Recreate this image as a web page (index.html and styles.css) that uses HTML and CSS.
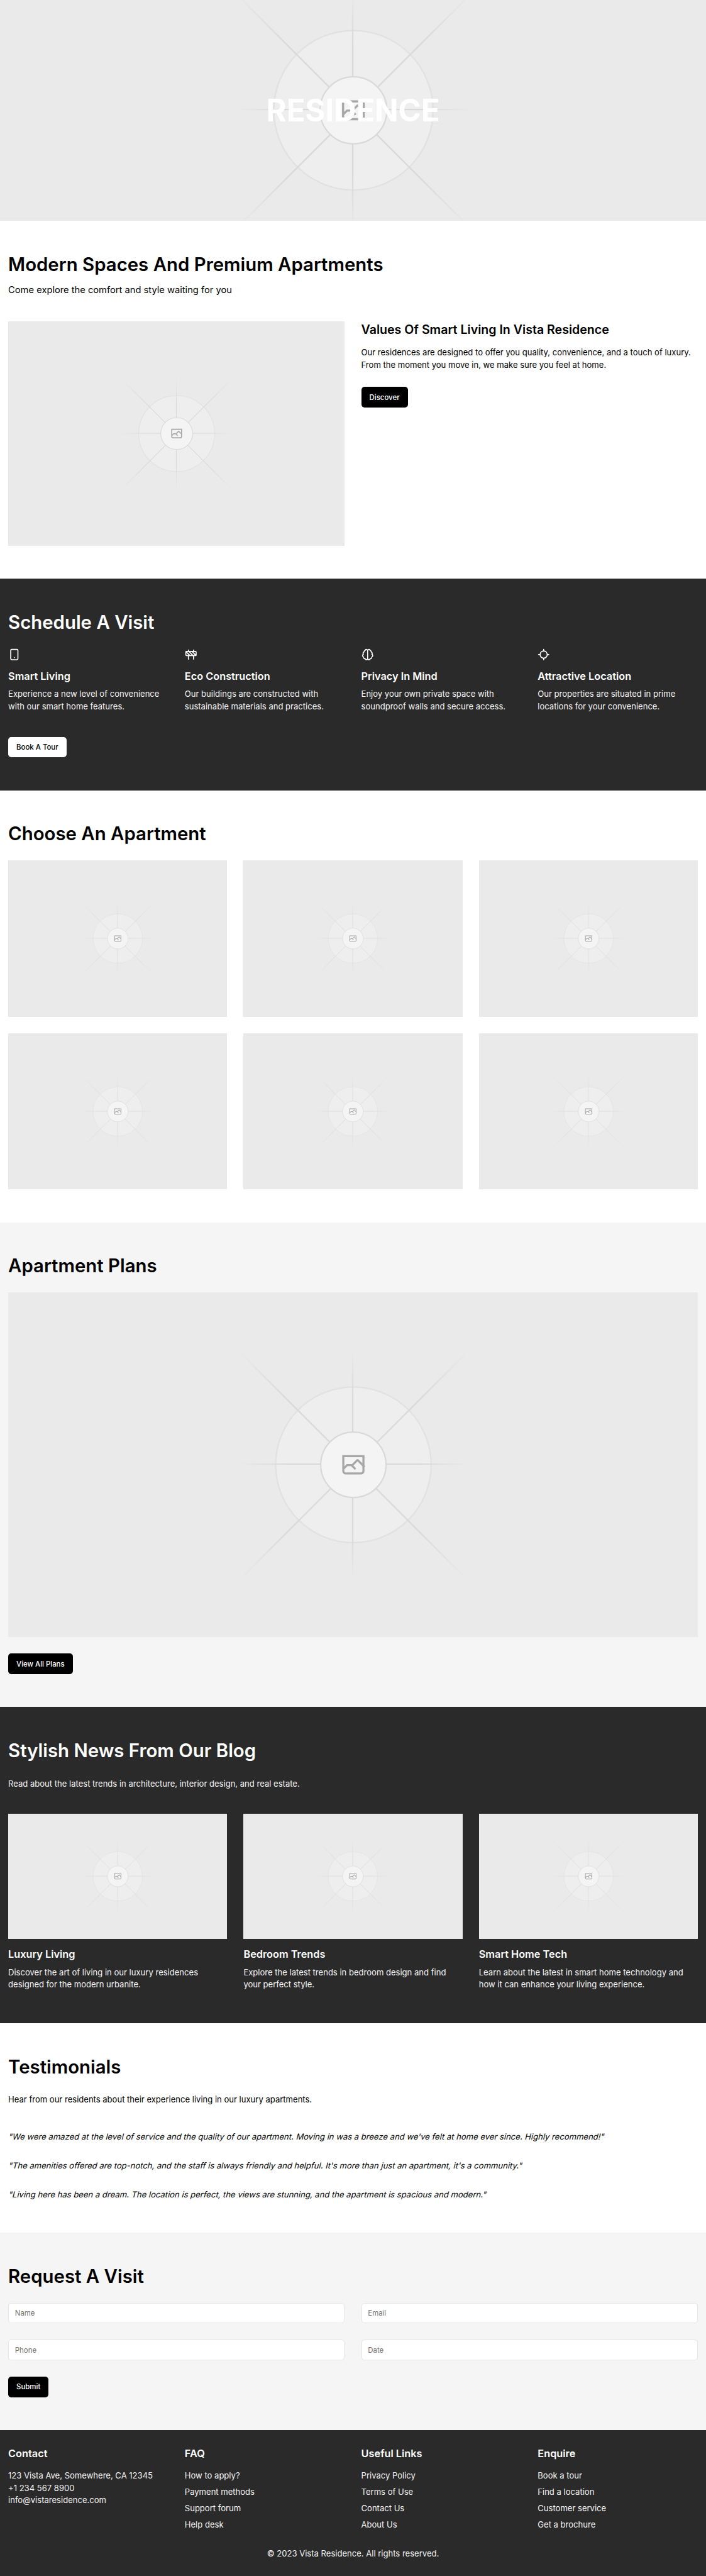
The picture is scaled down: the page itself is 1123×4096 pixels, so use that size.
FILE: index.html
```html
<!DOCTYPE html>
<html lang="en">
<head>
<meta charset="utf-8">
<title>Vista Residence</title>
<link rel="stylesheet" href="styles.css">
</head>
<body>
<svg class="defs" aria-hidden="true">
  <defs>
    <linearGradient id="ray-up" x1="554.061" x2="-.48" y1=".083" y2=".087" gradientUnits="userSpaceOnUse"><stop stop-color="#C9C9C9" stop-opacity="0"/><stop offset=".208" stop-color="#C9C9C9"/><stop offset=".792" stop-color="#C9C9C9"/><stop offset="1" stop-color="#C9C9C9" stop-opacity="0"/></linearGradient>
    <linearGradient id="ray-h" x1="796.912" x2="404.507" y1="599.963" y2="599.965" gradientUnits="userSpaceOnUse"><stop stop-color="#C9C9C9" stop-opacity="0"/><stop offset=".208" stop-color="#C9C9C9"/><stop offset=".792" stop-color="#C9C9C9"/><stop offset="1" stop-color="#C9C9C9" stop-opacity="0"/></linearGradient>
    <linearGradient id="ray-v" x1="600.792" x2="600.794" y1="403.677" y2="796.082" gradientUnits="userSpaceOnUse"><stop stop-color="#C9C9C9" stop-opacity="0"/><stop offset=".208" stop-color="#C9C9C9"/><stop offset=".792" stop-color="#C9C9C9"/><stop offset="1" stop-color="#C9C9C9" stop-opacity="0"/></linearGradient>
    <linearGradient id="ray-down" x1="404.85" x2="796.972" y1="403.903" y2="796.02" gradientUnits="userSpaceOnUse"><stop stop-color="#C9C9C9" stop-opacity="0"/><stop offset=".208" stop-color="#C9C9C9"/><stop offset=".792" stop-color="#C9C9C9"/><stop offset="1" stop-color="#C9C9C9" stop-opacity="0"/></linearGradient>
    <g id="photo" fill="none">
      <g opacity=".5">
        <g opacity=".5">
          <circle cx="600.709" cy="599.88" r="136.62" fill="#FAFAFA"/>
          <circle cx="600.709" cy="599.88" r="135.41" stroke="#C9C9C9" stroke-width="2.418"/>
        </g>
        <path stroke="url(#ray-up)" stroke-width="2.418" d="M0-1.209h553.581" transform="scale(1 -1) rotate(45 1163.11 91.165)"/>
        <path stroke="url(#ray-h)" stroke-width="2.418" d="M404.846 598.671h391.726"/>
        <path stroke="url(#ray-v)" stroke-width="2.418" d="M599.5 795.742V404.017"/>
        <path stroke="url(#ray-down)" stroke-width="2.418" d="m795.717 796.597-391.441-391.44"/>
        <circle cx="600.709" cy="599.88" r="56.825" fill="#fff"/>
        <path fill="#666" fill-rule="evenodd" d="M616.426 586.58h-31.434v16.176l3.553-3.554.531-.531h9.068l.074-.074 8.463-8.463h2.565l7.18 7.181V586.58Zm-15.715 14.654 3.698 3.699 1.283 1.282-2.565 2.565-1.282-1.283-5.2-5.199h-6.066l-5.514 5.514-.073.073v2.876a2.418 2.418 0 0 0 2.418 2.418h26.598a2.418 2.418 0 0 0 2.418-2.418v-8.317l-8.463-8.463-7.181 7.181-.071.072Zm-19.347 5.442v4.085a6.045 6.045 0 0 0 6.046 6.045h26.598a6.044 6.044 0 0 0 6.045-6.045v-7.108l1.356-1.355-1.282-1.283-.074-.073v-17.989h-38.689v23.43l-.146.146.146.147Z"/>
        <circle cx="600.709" cy="599.88" r="56.825" stroke="#C9C9C9" stroke-width="2.418"/>
      </g>
    </g>
  </defs>
</svg>

<header class="hero">
  <svg class="photo hero-photo" viewBox="0 0 1200 1200" preserveAspectRatio="xMidYMid slice"><use href="#photo"/></svg>
  <h1 class="hero-title">RESIDENCE</h1>
</header>

<section class="section">
  <h2 class="title">Modern Spaces And Premium Apartments</h2>
  <p class="lead">Come explore the comfort and style waiting for you</p>
  <div class="intro">
    <svg class="photo photo-intro" viewBox="0 0 1200 1200" preserveAspectRatio="xMidYMid slice"><use href="#photo"/></svg>
    <div>
      <h3 class="intro-title">Values Of Smart Living In Vista Residence</h3>
      <p class="intro-text">Our residences are designed to offer you quality, convenience, and a touch of luxury. From the moment you move in, we make sure you feel at home.</p>
      <button class="btn" type="button">Discover</button>
    </div>
  </div>
</section>

<section class="section dark">
  <h2 class="title">Schedule A Visit</h2>
  <div class="features">
    <div>
      <svg class="icon" viewBox="0 0 24 24"><rect x="5" y="2" width="14" height="20" rx="2"/><path d="M12 18h.01"/></svg>
      <h3 class="card-title">Smart Living</h3>
      <p>Experience a new level of convenience with our smart home features.</p>
    </div>
    <div>
      <svg class="icon" viewBox="0 0 24 24"><rect x="2" y="6" width="20" height="8" rx="1"/><path d="M17 14v7M7 14v7M17 3v3M7 3v3M10 14 2.3 6.300M14 6l7.700 7.700M8 6l8 8"/></svg>
      <h3 class="card-title">Eco Construction</h3>
      <p>Our buildings are constructed with sustainable materials and practices.</p>
    </div>
    <div>
      <svg class="icon" viewBox="0 0 24 24"><path d="M9.500 2A2.500 2.500 0 0 1 12 4.500v15a2.500 2.500 0 0 1-4.960.440 2.500 2.500 0 0 1-2.960-3.080 3 3 0 0 1-.340-5.580 2.500 2.500 0 0 1 1.320-4.240 2.500 2.500 0 0 1 1.980-3A2.500 2.500 0 0 1 9.500 2ZM14.500 2A2.500 2.500 0 0 0 12 4.500v15a2.500 2.500 0 0 0 4.960.440 2.500 2.500 0 0 0 2.960-3.080 3 3 0 0 0 .340-5.580 2.500 2.500 0 0 0-1.320-4.240 2.500 2.500 0 0 0-1.980-3A2.500 2.500 0 0 0 14.500 2Z"/></svg>
      <h3 class="card-title">Privacy In Mind</h3>
      <p>Enjoy your own private space with soundproof walls and secure access.</p>
    </div>
    <div>
      <svg class="icon" viewBox="0 0 24 24"><path d="M2 12h3M19 12h3M12 2v3M12 19v3"/><circle cx="12" cy="12" r="7"/></svg>
      <h3 class="card-title">Attractive Location</h3>
      <p>Our properties are situated in prime locations for your convenience.</p>
    </div>
  </div>
  <button class="btn btn-light" type="button">Book A Tour</button>
</section>

<section class="section">
  <h2 class="title">Choose An Apartment</h2>
  <div class="thirds">
    <svg class="photo photo-unit" viewBox="0 0 1200 1200" preserveAspectRatio="xMidYMid slice"><use href="#photo"/></svg>
    <svg class="photo photo-unit" viewBox="0 0 1200 1200" preserveAspectRatio="xMidYMid slice"><use href="#photo"/></svg>
    <svg class="photo photo-unit" viewBox="0 0 1200 1200" preserveAspectRatio="xMidYMid slice"><use href="#photo"/></svg>
    <svg class="photo photo-unit" viewBox="0 0 1200 1200" preserveAspectRatio="xMidYMid slice"><use href="#photo"/></svg>
    <svg class="photo photo-unit" viewBox="0 0 1200 1200" preserveAspectRatio="xMidYMid slice"><use href="#photo"/></svg>
    <svg class="photo photo-unit" viewBox="0 0 1200 1200" preserveAspectRatio="xMidYMid slice"><use href="#photo"/></svg>
  </div>
</section>

<section class="section muted">
  <h2 class="title">Apartment Plans</h2>
  <svg class="photo photo-plan" viewBox="0 0 1200 1200" preserveAspectRatio="xMidYMid slice"><use href="#photo"/></svg>
  <button class="btn" type="button">View All Plans</button>
</section>

<section class="section dark">
  <h2 class="title">Stylish News From Our Blog</h2>
  <p class="summary">Read about the latest trends in architecture, interior design, and real estate.</p>
  <div class="thirds">
    <article>
      <svg class="photo photo-post" viewBox="0 0 1200 1200" preserveAspectRatio="xMidYMid slice"><use href="#photo"/></svg>
      <h3 class="card-title">Luxury Living</h3>
      <p>Discover the art of living in our luxury residences designed for the modern urbanite.</p>
    </article>
    <article>
      <svg class="photo photo-post" viewBox="0 0 1200 1200" preserveAspectRatio="xMidYMid slice"><use href="#photo"/></svg>
      <h3 class="card-title">Bedroom Trends</h3>
      <p>Explore the latest trends in bedroom design and find your perfect style.</p>
    </article>
    <article>
      <svg class="photo photo-post" viewBox="0 0 1200 1200" preserveAspectRatio="xMidYMid slice"><use href="#photo"/></svg>
      <h3 class="card-title">Smart Home Tech</h3>
      <p>Learn about the latest in smart home technology and how it can enhance your living experience.</p>
    </article>
  </div>
</section>

<section class="section">
  <h2 class="title">Testimonials</h2>
  <p class="summary">Hear from our residents about their experience living in our luxury apartments.</p>
  <div class="quotes">
    <blockquote class="quote">"We were amazed at the level of service and the quality of our apartment. Moving in was a breeze and we've felt at home ever since. Highly recommend!"</blockquote>
    <blockquote class="quote">"The amenities offered are top-notch, and the staff is always friendly and helpful. It's more than just an apartment, it's a community."</blockquote>
    <blockquote class="quote">"Living here has been a dream. The location is perfect, the views are stunning, and the apartment is spacious and modern."</blockquote>
  </div>
</section>

<section class="section muted">
  <h2 class="title">Request A Visit</h2>
  <form>
    <div class="fields">
      <input class="input" type="text" placeholder="Name">
      <input class="input" type="email" placeholder="Email">
      <input class="input" type="tel" placeholder="Phone">
      <input class="input" type="text" placeholder="Date">
    </div>
    <button class="btn" type="button">Submit</button>
  </form>
</section>

<footer class="footer dark">
  <div class="footer-cols">
    <div>
      <h3 class="footer-title">Contact</h3>
      <p>123 Vista Ave, Somewhere, CA 12345</p>
      <p>+1 234 567 8900</p>
      <p>info@vistaresidence.com</p>
    </div>
    <div>
      <h3 class="footer-title">FAQ</h3>
      <ul class="links"><li>How to apply?</li><li>Payment methods</li><li>Support forum</li><li>Help desk</li></ul>
    </div>
    <div>
      <h3 class="footer-title">Useful Links</h3>
      <ul class="links"><li>Privacy Policy</li><li>Terms of Use</li><li>Contact Us</li><li>About Us</li></ul>
    </div>
    <div>
      <h3 class="footer-title">Enquire</h3>
      <ul class="links"><li>Book a tour</li><li>Find a location</li><li>Customer service</li><li>Get a brochure</li></ul>
    </div>
  </div>
  <p class="copyright">© 2023 Vista Residence. All rights reserved.</p>
</footer>
</body>
</html>
```
FILE: styles.css
```css
/* 86rem spans the full page width */
html {
  font-size: calc(100vw / 86);
}

* {
  box-sizing: border-box;
}

body {
  display: flex;
  flex-direction: column;
  min-height: 100vh;
  margin: 0;
  background: #fff;
  color: #000;
  font-family: Inter, "Liberation Sans", sans-serif;
  font-size: 1rem;
  line-height: 1.5rem;
}

h1, h2, h3, p, ul, li, blockquote {
  margin: 0;
  padding: 0;
}

/* running text sits a pixel low in its line */
p,
li,
.quote {
  margin-bottom: -1px;
  padding-top: 1px;
}

ul {
  list-style: none;
}

.defs {
  position: absolute;
  width: 0;
  height: 0;
}

.photo {
  display: block;
  width: 100%;
  background: #eaeaea;
}

.hero {
  display: grid;
  height: 26.875rem;
}

.hero-photo,
.hero-title {
  grid-area: 1 / 1;
}

.hero-photo {
  height: 26.875rem;
}

.hero-title {
  z-index: 1;
  place-self: center;
  padding-top: 0.1rem;
  color: #fff;
  font-size: 3.75rem;
  font-weight: 700;
  line-height: 1;
}

.section {
  padding: 4.01rem 1rem;
}

.dark {
  background: #2a2a2a;
  color: #fff;
}

.dark p,
.dark li {
  color: #f5f5f5;
}

.muted {
  background: #f5f5f5;
}

.title {
  margin-bottom: 1.9rem;
  padding-top: 0.1rem;
  font-size: 2.25rem;
  font-weight: 600;
  line-height: 2.5rem;
}

.lead {
  margin-top: -1rem;
  margin-bottom: calc(3rem - 1px);
  font-size: 1.125rem;
  line-height: 1.75rem;
}

.summary {
  margin-bottom: calc(3rem - 1px);
}

.intro {
  display: grid;
  grid-template-columns: 1fr 1fr;
  gap: 2rem;
}

.photo-intro {
  aspect-ratio: 3 / 2;
}

.intro-title {
  margin-bottom: 1rem;
  font-size: 1.5rem;
  font-weight: 600;
  line-height: 2rem;
}

.intro-text {
  margin-bottom: calc(2rem - 1px);
}

.btn {
  display: block;
  height: 2.5rem;
  padding: 0 1rem;
  border: 0;
  border-radius: 0.375rem;
  background: #000;
  color: #fff;
  font: 500 0.875rem/1.25rem Inter, "Liberation Sans", sans-serif;
}

.btn-light {
  background: #fff;
  color: #000;
}

.features,
.footer-cols {
  display: grid;
  grid-template-columns: repeat(4, 1fr);
  gap: 2rem;
}

.features {
  margin-bottom: 3rem;
}

.icon {
  display: block;
  width: 1.5rem;
  height: 1.5rem;
  fill: none;
  stroke: currentColor;
  stroke-width: 2;
  stroke-linecap: round;
  stroke-linejoin: round;
}

.card-title {
  margin: 1rem 0 0.5rem;
  font-size: 1.25rem;
  font-weight: 600;
  line-height: 1.75rem;
}

.thirds {
  display: grid;
  grid-template-columns: repeat(3, 1fr);
  gap: 2rem;
}

.photo-unit {
  aspect-ratio: 7 / 5;
}

.photo-plan {
  aspect-ratio: 2 / 1;
  margin-bottom: 2rem;
}

.photo-post {
  aspect-ratio: 7 / 4;
}

.quotes {
  display: grid;
  gap: 2rem;
}

/* slant the upright face around its baseline, keeping its letterforms */
.quote {
  transform: skewX(-14deg);
  transform-origin: 0 73%;
}

.fields {
  display: grid;
  grid-template-columns: 1fr 1fr;
  gap: 2rem;
  margin-bottom: 2rem;
}

.input {
  width: 100%;
  height: 2.5rem;
  padding: 0.5rem 0.75rem;
  border: 1px solid #e5e5e5;
  border-radius: 0.375rem;
  background: #fff;
  font: 400 0.875rem/1.25rem Inter, "Liberation Sans", sans-serif;
}

.input::placeholder {
  color: #737373;
}

.footer {
  flex-grow: 1;
  padding: 2rem 1rem;
}

.footer-title {
  margin-bottom: 1rem;
  font-size: 1.25rem;
  font-weight: 600;
  line-height: 1.75rem;
}

.links {
  display: grid;
  gap: 0.5rem;
}

.copyright {
  margin-top: 2rem;
  text-align: center;
}
```
